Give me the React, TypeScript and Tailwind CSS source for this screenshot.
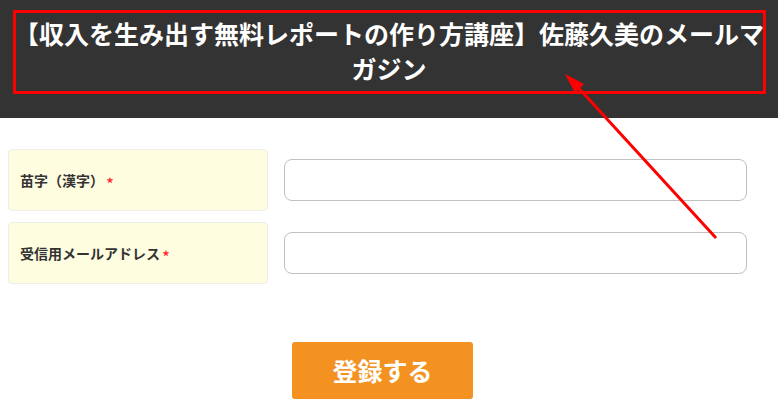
import React from "react";

const fields = ["苗字（漢字）", "受信用メールアドレス"];

export default function App() {
    return (
        <div className="relative w-[778px] h-[411px] overflow-hidden bg-white font-['Noto_Sans_CJK_JP',sans-serif] text-[#333]">
            <header className="h-[118px] bg-[#333333] px-[10px] pt-[16px]">
                <h1 className="text-center text-[25px] leading-[35px] font-bold text-white">
                    【収入を生み出す無料レポートの作り方講座】佐藤久美のメールマガジン
                </h1>
            </header>

            <form className="pt-[31px] pl-[8px] w-[757px] flex flex-col gap-[11px]">
                {fields.map((label) => (
                    <div key={label} className="flex items-center gap-[16px]">
                        <div className="w-[260px] h-[62px] flex items-center pl-[11px] bg-[#fffde0] border border-[#eeeeea] rounded-[4px] text-[14px] font-bold">
                            {label}
                            <span className="text-[#ff2020] text-[17px] font-normal ml-[2px] translate-y-[4px]">*</span>
                        </div>
                        <input className="w-[463px] h-[42px] border border-[#c0c0c0] rounded-[8px] bg-white" />
                    </div>
                ))}
                <div className="flex justify-center mt-[47px]">
                    <button
                        type="button"
                        className="w-[181px] h-[57px] bg-[#f39220] rounded-[3px] text-white text-[25px] font-bold"
                    >
                        登録する
                    </button>
                </div>
            </form>

            {/* annotation overlay */}
            <div className="absolute left-[13px] top-[10px] w-[753px] h-[84px] border-[3px] border-[#ff0000]" />
            <svg className="absolute left-0 top-0 pointer-events-none" width="778" height="411">
                <line x1="716" y1="238" x2="574" y2="83" stroke="#ff0000" strokeWidth="3" />
                <polygon points="565,74 584,84 575,93" fill="#ff0000" />
            </svg>
        </div>
    );
}
